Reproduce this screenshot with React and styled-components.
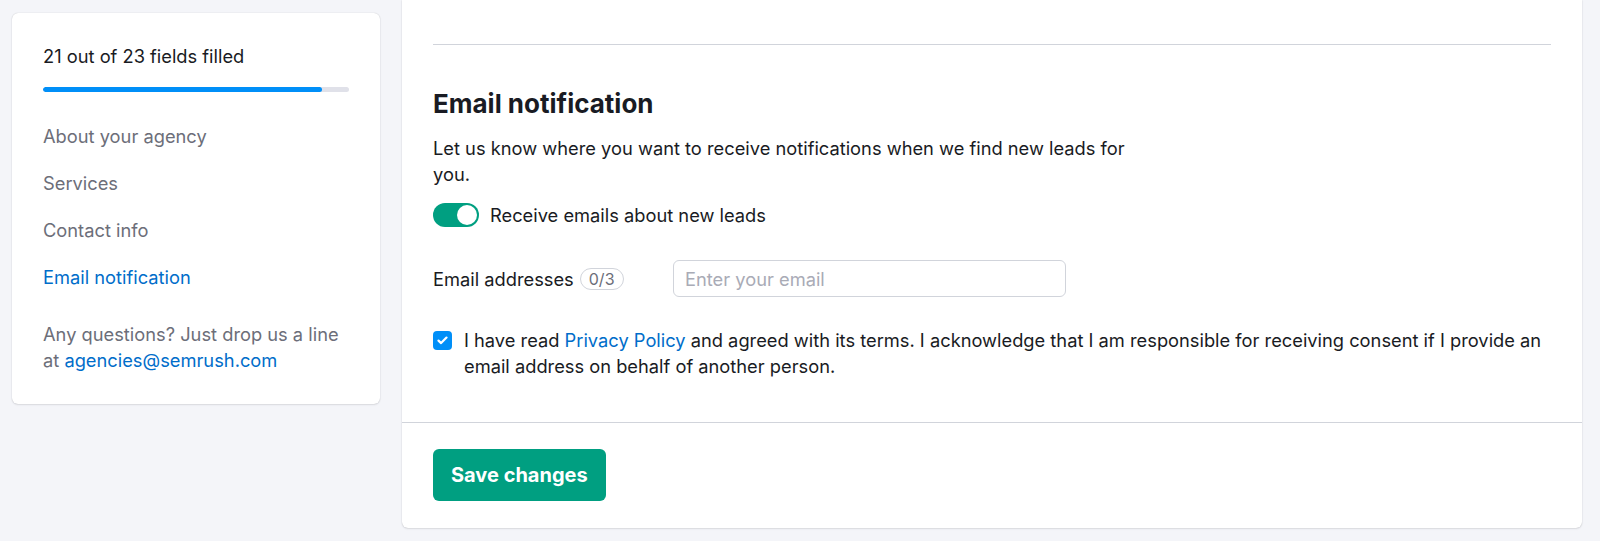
import React from 'react';
import styled, { createGlobalStyle } from 'styled-components';

const GlobalStyle = createGlobalStyle`
  * {
    box-sizing: border-box;
  }

  body {
    margin: 0;
    background: #f4f5f9;
    font-family: Inter, 'Noto Sans', sans-serif;
    font-size: 18.3px;
    line-height: 26px;
    color: #191b23;
  }
`;

const Page = styled.div`
  display: flex;
  align-items: flex-start;
  gap: 22px;
  padding: 0 18px 13px 12px;
`;

const Sidebar = styled.aside`
  width: 368px;
  flex-shrink: 0;
  margin-top: 13px;
  padding: 30px 31px 31px;
  background: #fff;
  border-radius: 6px;
  box-shadow: 0 0 1px rgba(25, 27, 35, 0.25), 0 1px 2px rgba(25, 27, 35, 0.1);
`;

const Progress = styled.div`
  margin-top: 18px;
  height: 5px;
  border-radius: 3px;
  background: #e0e1e9;
  overflow: hidden;
`;

const ProgressFill = styled.div`
  height: 100%;
  border-radius: 3px;
  background: #008ff8;
`;

const Nav = styled.nav`
  display: flex;
  flex-direction: column;
  gap: 21px;
  margin-top: 31px;
`;

const NavItem = styled.a`
  color: ${(p) => (p.$active ? '#006dca' : '#6c6e79')};
  text-decoration: none;
  cursor: pointer;
`;

const Help = styled.p`
  margin: 31px 0 0;
  color: #6c6e79;
`;

const Link = styled.a`
  color: #006dca;
  text-decoration: none;
`;

const Main = styled.main`
  flex: 1;
  background: #fff;
  border-radius: 0 0 6px 6px;
  box-shadow: 0 0 1px rgba(25, 27, 35, 0.25), 0 1px 2px rgba(25, 27, 35, 0.1);
`;

const Section = styled.section`
  padding: 44px 31px 43px;
`;

const Rule = styled.hr`
  margin: 0;
  border: none;
  border-top: 1px solid #d1d4db;
`;

const Title = styled.h2`
  margin: 43px 0 0;
  font-size: 26px;
  line-height: 32px;
  font-weight: 700;
  color: #191b23;
`;

const Description = styled.p`
  margin: 15px 0 0;
  max-width: 712px;
`;

const ToggleRow = styled.label`
  display: flex;
  align-items: center;
  gap: 11px;
  margin-top: 15px;
  height: 26px;
  cursor: pointer;
`;

const Switch = styled.span`
  display: flex;
  align-items: center;
  justify-content: ${(p) => (p.$on ? 'flex-end' : 'flex-start')};
  width: 46px;
  height: 24px;
  padding: 2px;
  border-radius: 12px;
  background: ${(p) => (p.$on ? '#009f81' : '#a9abb6')};
`;

const Knob = styled.span`
  width: 20px;
  height: 20px;
  border-radius: 50%;
  background: #fff;
`;

const FieldRow = styled.div`
  display: flex;
  align-items: center;
  margin-top: 32px;
`;

const FieldLabel = styled.div`
  display: flex;
  align-items: center;
  gap: 6px;
  width: 240px;
`;

const Counter = styled.span`
  display: inline-flex;
  align-items: center;
  height: 22px;
  padding: 0 8px;
  border: 1px solid #d1d4db;
  border-radius: 11px;
  font-size: 16px;
  color: #6c6e79;
`;

const Input = styled.input`
  width: 393px;
  height: 37px;
  padding: 0 11px;
  border: 1px solid #d1d4db;
  border-radius: 6px;
  font-family: inherit;
  font-size: 18.3px;
  color: #191b23;

  &::placeholder {
    color: #a9abb6;
  }

  &:focus {
    outline: none;
  }
`;

const Consent = styled.label`
  display: flex;
  align-items: flex-start;
  gap: 12px;
  margin-top: 30px;
`;

const CheckBox = styled.span`
  display: flex;
  align-items: center;
  justify-content: center;
  flex-shrink: 0;
  width: 19px;
  height: 19px;
  margin-top: 4px;
  border-radius: 4px;
  background: #008ff8;
`;

const Footer = styled.div`
  padding: 26px 31px 27px;
  border-top: 1px solid #d1d4db;
`;

const SaveButton = styled.button`
  height: 52px;
  padding: 0 18px;
  border: none;
  border-radius: 6px;
  background: #009f81;
  color: #fff;
  font-family: inherit;
  font-size: 20px;
  font-weight: 700;
  cursor: pointer;
`;

const sections = ['About your agency', 'Services', 'Contact info', 'Email notification'];

const App = () => {
  const filled = 21;
  const total = 23;

  return (
    <>
      <GlobalStyle />
      <Page>
        <Sidebar>
          <div>{filled} out of {total} fields filled</div>
          <Progress>
            <ProgressFill style={{ width: `${(filled / total) * 100}%` }} />
          </Progress>
          <Nav>
            {sections.map((s) => (
              <NavItem key={s} $active={s === 'Email notification'}>{s}</NavItem>
            ))}
          </Nav>
          <Help>
            Any questions? Just drop us a line at <Link>agencies@semrush.com</Link>
          </Help>
        </Sidebar>

        <Main>
          <Section>
            <Rule />
            <Title>Email notification</Title>
            <Description>
              Let us know where you want to receive notifications when we find new leads for you.
            </Description>
            <ToggleRow>
              <Switch $on>
                <Knob />
              </Switch>
              Receive emails about new leads
            </ToggleRow>
            <FieldRow>
              <FieldLabel>
                Email addresses <Counter>0/3</Counter>
              </FieldLabel>
              <Input type="email" placeholder="Enter your email" />
            </FieldRow>
            <Consent>
              <CheckBox>
                <svg width="11" height="9" viewBox="0 0 11 9" fill="none">
                  <path d="M1.5 4.6L4.1 7.1L9.5 1.6" stroke="#fff" strokeWidth="2.2" strokeLinecap="round" strokeLinejoin="round" />
                </svg>
              </CheckBox>
              <span>
                I have read <Link>Privacy Policy</Link> and agreed with its terms. I acknowledge that I am
                responsible for receiving consent if I provide an email address on behalf of another person.
              </span>
            </Consent>
          </Section>
          <Footer>
            <SaveButton>Save changes</SaveButton>
          </Footer>
        </Main>
      </Page>
    </>
  );
};

export default App;
